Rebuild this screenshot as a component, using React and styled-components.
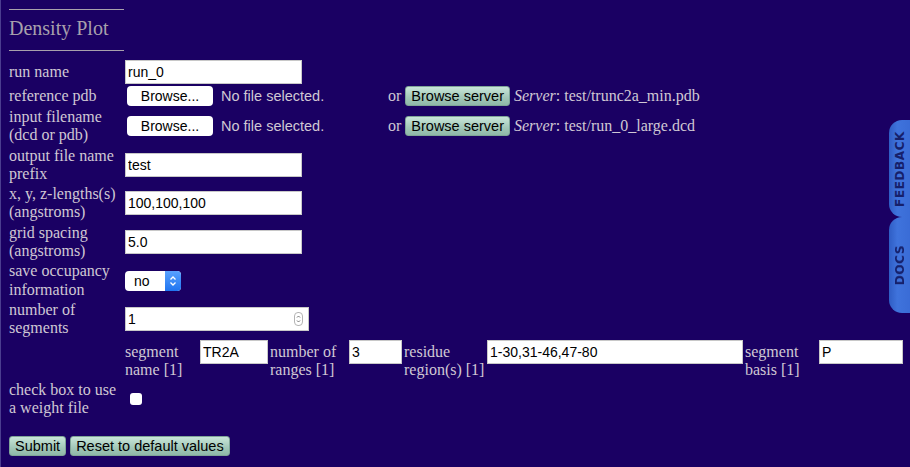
import React from "react";
import styled, { createGlobalStyle } from "styled-components";

const GlobalStyle = createGlobalStyle`
  html, body {
    background: #1a0063;
  }
  body {
    margin: 0;
    border-left: 1px solid #4b3d8f;
    min-height: 467px;
    box-sizing: border-box;
    font-family: "Liberation Serif", "Times New Roman", serif;
    font-size: 16px;
    color: #d0c8d4;
  }
`;

const Page = styled.div`
  padding: 9px 8px 0 8px;
`;

const Rule = styled.div`
  width: 115px;
  height: 1px;
  background: #a8a0ac;
  margin-top: ${(p) => p.$top || 0}px;
`;

const Heading = styled.h2`
  margin: 7px 0 0 0;
  font-size: 20px;
  font-weight: normal;
  line-height: 22px;
  color: #a8a0ac;
`;

const Form = styled.form`
  margin-top: 9px;
  display: flex;
  flex-direction: column;
  gap: 2px;
`;

const Row = styled.div`
  display: grid;
  grid-template-columns: 116px 1fr;
  align-items: ${(p) => (p.$top ? "start" : "center")};
`;

const Label = styled.div`
  line-height: 18.3px;
`;

const Cell = styled.div`
  display: flex;
  align-items: center;
`;

const TextInput = styled.input`
  box-sizing: border-box;
  width: ${(p) => p.$w || 177}px;
  height: 24px;
  border: 1px solid #c8c8c8;
  padding: 0 2px;
  margin: 0;
  background: #fff;
  color: #000;
  font-family: "Liberation Sans", Arial, sans-serif;
  font-size: 14px;
  outline: none;
`;

const FileCell = styled.div`
  width: 259px;
  display: flex;
  align-items: center;
  gap: 8px;
  padding-left: 2px;
  font-family: "Liberation Sans", Arial, sans-serif;
  font-size: 14.5px;
`;

const FileButton = styled.button`
  width: 86px;
  height: 20px;
  padding: 0;
  border: none;
  border-radius: 4px;
  background: #fff;
  color: #000;
  font-family: "Liberation Sans", Arial, sans-serif;
  font-size: 14px;
`;

const Or = styled.span`
  margin: 0 4px 0 2px;
`;

const GreenButton = styled.button`
  height: 20px;
  padding: 0 5px;
  border: 1px solid #7fa597;
  border-radius: 3px;
  background: linear-gradient(#c9e6d9, #a2c7b8 60%, #8fb8a8);
  color: #000;
  font-family: "Liberation Sans", Arial, sans-serif;
  font-size: 14.5px;
  line-height: 18px;
`;

const ServerNote = styled.span`
  margin-left: 4px;
  white-space: nowrap;
  em {
    font-style: italic;
  }
`;

const SelectBox = styled.div`
  display: inline-flex;
  height: 20px;
  border-radius: 4px;
  overflow: hidden;
  background: #fff;
`;

const SelectText = styled.span`
  width: 40px;
  padding-left: 9px;
  box-sizing: border-box;
  color: #000;
  font-family: "Liberation Sans", Arial, sans-serif;
  font-size: 14px;
  line-height: 20px;
`;

const SelectArrow = styled.span`
  width: 16px;
  display: flex;
  align-items: center;
  justify-content: center;
  background: linear-gradient(#5aa2ff, #1f74f0);
`;

const NumberBox = styled.div`
  box-sizing: border-box;
  width: 184px;
  height: 24px;
  border: 1px solid #c8c8c8;
  background: #fff;
  display: flex;
  align-items: center;
  padding: 0 5px 0 2px;
`;

const NumberText = styled.span`
  flex: 1;
  color: #000;
  font-family: "Liberation Sans", Arial, sans-serif;
  font-size: 14px;
`;

const Spinner = styled.span`
  width: 7px;
  height: 12px;
  border: 1px solid #b4b4b4;
  border-radius: 4px;
  display: flex;
  align-items: center;
  justify-content: center;
`;

const SegmentFields = styled.div`
  display: flex;
  align-items: flex-start;
  gap: 2px;
`;

const SegLabel = styled.div`
  width: ${(p) => p.$w}px;
  line-height: 18.3px;
  padding-top: 3px;
`;

const Check = styled.input`
  appearance: none;
  width: 12px;
  height: 12px;
  margin: 0 0 0 5px;
  border-radius: 3px;
  background: #fff;
`;

const Actions = styled.div`
  margin-top: 18px;
  display: flex;
  gap: 4px;
`;

const Tabs = styled.div`
  position: fixed;
  right: 0;
  top: 120px;
  display: flex;
  flex-direction: column;
`;

const Tab = styled.div`
  width: 21px;
  height: ${(p) => p.$h}px;
  box-sizing: border-box;
  border-radius: 13px 0 0 13px;
  background: linear-gradient(90deg, #2f5dc4, #3f73dc 40%, #3a6cd6);
  display: flex;
  align-items: center;
  justify-content: center;
`;

const TabText = styled.span`
  writing-mode: vertical-rl;
  transform: rotate(180deg);
  font-family: "DejaVu Sans", "Liberation Sans", sans-serif;
  font-weight: bold;
  font-size: 12px;
  letter-spacing: 0.6px;
  color: #16206a;
`;

const segments = [
  { label: "segment name [1]", lw: 73, value: "TR2A", w: 68 },
  { label: "number of ranges [1]", lw: 77, value: "3", w: 53 },
  { label: "residue region(s) [1]", lw: 81, value: "1-30,31-46,47-80", w: 256 },
  { label: "segment basis [1]", lw: 72, value: "P", w: 84 },
];

function FileRow({ server }) {
  return (
    <Cell>
      <FileCell>
        <FileButton type="button">Browse...</FileButton>
        <span>No file selected.</span>
      </FileCell>
      <Or>or</Or>
      <GreenButton type="button">Browse server</GreenButton>
      <ServerNote>
        <em>Server</em>: {server}
      </ServerNote>
    </Cell>
  );
}

function App() {
  return (
    <>
      <GlobalStyle />
      <Page>
        <Rule />
        <Heading>Density Plot</Heading>
        <Rule $top={11} />
        <Form onSubmit={(e) => e.preventDefault()}>
          <Row>
            <Label>run name</Label>
            <Cell>
              <TextInput defaultValue="run_0" />
            </Cell>
          </Row>
          <Row>
            <Label>reference pdb</Label>
            <FileRow server="test/trunc2a_min.pdb" />
          </Row>
          <Row>
            <Label>input filename (dcd or pdb)</Label>
            <FileRow server="test/run_0_large.dcd" />
          </Row>
          <Row>
            <Label>output file name prefix</Label>
            <Cell>
              <TextInput defaultValue="test" />
            </Cell>
          </Row>
          <Row>
            <Label>x, y, z-lengths(s) (angstroms)</Label>
            <Cell>
              <TextInput defaultValue="100,100,100" />
            </Cell>
          </Row>
          <Row>
            <Label>grid spacing (angstroms)</Label>
            <Cell>
              <TextInput defaultValue="5.0" />
            </Cell>
          </Row>
          <Row>
            <Label>save occupancy information</Label>
            <Cell>
              <SelectBox>
                <SelectText>no</SelectText>
                <SelectArrow>
                  <svg width="8" height="12" viewBox="0 0 8 12">
                    <path d="M1.5 4.5 L4 2 L6.5 4.5 M1.5 7.5 L4 10 L6.5 7.5" fill="none" stroke="#fff" strokeWidth="1.3" />
                  </svg>
                </SelectArrow>
              </SelectBox>
            </Cell>
          </Row>
          <Row>
            <Label>number of segments</Label>
            <Cell>
              <NumberBox>
                <NumberText>1</NumberText>
                <Spinner>
                  <svg width="5" height="10" viewBox="0 0 5 10">
                    <path d="M1 3.5 L2.5 2 L4 3.5 M1 6.5 L2.5 8 L4 6.5" fill="none" stroke="#666" strokeWidth="0.9" />
                  </svg>
                </Spinner>
              </NumberBox>
            </Cell>
          </Row>
          <Row $top>
            <div />
            <SegmentFields>
              {segments.map((s) => (
                <React.Fragment key={s.label}>
                  <SegLabel $w={s.lw}>{s.label}</SegLabel>
                  <TextInput $w={s.w} defaultValue={s.value} />
                </React.Fragment>
              ))}
            </SegmentFields>
          </Row>
          <Row>
            <Label>check box to use a weight file</Label>
            <Cell>
              <Check type="checkbox" />
            </Cell>
          </Row>
        </Form>
        <Actions>
          <GreenButton type="button">Submit</GreenButton>
          <GreenButton type="button">Reset to default values</GreenButton>
        </Actions>
      </Page>
      <Tabs>
        <Tab $h={97}>
          <TabText>FEEDBACK</TabText>
        </Tab>
        <Tab $h={96}>
          <TabText>DOCS</TabText>
        </Tab>
      </Tabs>
    </>
  );
}

export default App;
